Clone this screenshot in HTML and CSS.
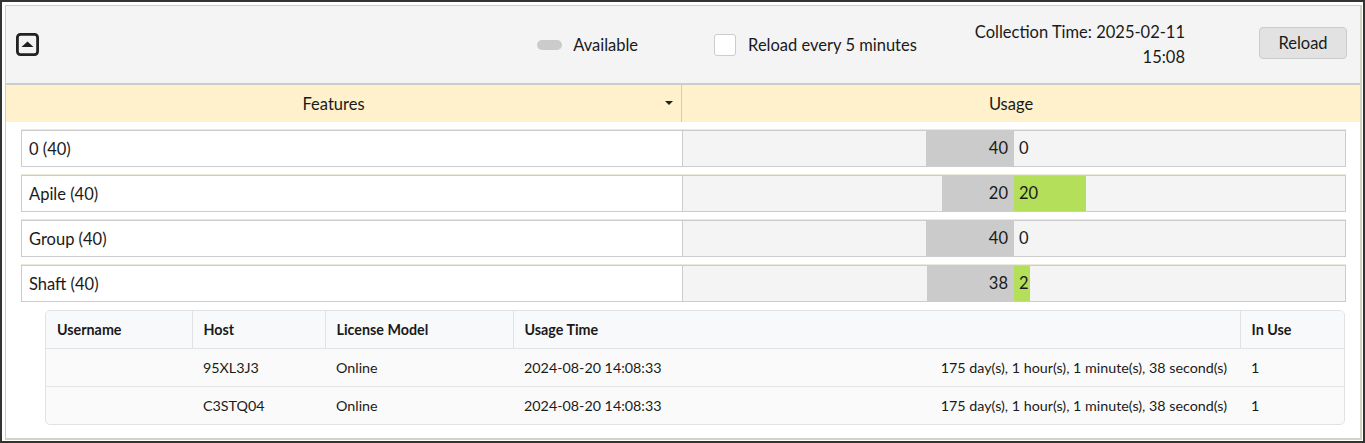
FILE: index.html
```html
<!DOCTYPE html>
<html lang="en">
<head>
  <meta charset="UTF-8" />
  <title>License Usage</title>
  <link rel="stylesheet" href="styles.css">
</head>
<body>
  <div class="frame">
    <div class="panel">

      <div class="toolbar">
        <button class="collapse" title="Collapse">
          <svg width="23" height="23" viewBox="0 0 23 23">
            <rect x="1.4" y="1.4" width="20.2" height="20.2" rx="3" fill="none" stroke="#222" stroke-width="2.8"/>
            <path d="M5.5 14 L11.5 8.5 L17.5 14 Z" fill="#222"/>
          </svg>
        </button>

        <div class="legend"><span class="swatch"></span>Available</div>

        <label class="auto"><span class="box"></span>Reload every 5 minutes</label>

        <div class="stamp">Collection Time: 2025-02-11<br>15:08</div>

        <button class="reload">Reload</button>
      </div>

      <div class="grid-head">
        <div class="col-features">Features <span class="caret"></span></div>
        <div class="col-usage">Usage</div>
      </div>

      <div class="rows">
        <div class="row">
          <div class="name">0 (40)</div>
          <div class="usage">
            <div class="half left"><div class="avail" style="width:88px">40</div></div>
            <div class="half right"><div class="used">0</div></div>
          </div>
        </div>

        <div class="row">
          <div class="name">Apile (40)</div>
          <div class="usage">
            <div class="half left"><div class="avail" style="width:72px">20</div></div>
            <div class="half right"><div class="used on" style="width:72px">20</div></div>
          </div>
        </div>

        <div class="row">
          <div class="name">Group (40)</div>
          <div class="usage">
            <div class="half left"><div class="avail" style="width:88px">40</div></div>
            <div class="half right"><div class="used">0</div></div>
          </div>
        </div>

        <div class="row">
          <div class="name">Shaft (40)</div>
          <div class="usage">
            <div class="half left"><div class="avail" style="width:87px">38</div></div>
            <div class="half right"><div class="used on" style="width:16px">2</div></div>
          </div>
        </div>

        <div class="detail-wrap">
          <table class="detail">
            <thead>
              <tr>
                <th class="c-user">Username</th>
                <th class="c-host">Host</th>
                <th class="c-model">License Model</th>
                <th class="c-time">Usage Time</th>
                <th class="c-use">In Use</th>
              </tr>
            </thead>
            <tbody>
              <tr>
                <td></td>
                <td>95XL3J3</td>
                <td>Online</td>
                <td class="c-time"><span>2024-08-20 14:08:33</span><span>175 day(s), 1 hour(s), 1 minute(s), 38 second(s)</span></td>
                <td>1</td>
              </tr>
              <tr>
                <td></td>
                <td>C3STQ04</td>
                <td>Online</td>
                <td class="c-time"><span>2024-08-20 14:08:33</span><span>175 day(s), 1 hour(s), 1 minute(s), 38 second(s)</span></td>
                <td>1</td>
              </tr>
            </tbody>
          </table>
        </div>
      </div>

    </div>
  </div>
</body>
</html>
```

FILE: styles.css
```css
* { margin: 0; padding: 0; box-sizing: border-box; }

body {
  background: #fff;
  font-family: Lato, "Noto Sans", sans-serif;
  color: #1a1a1a;
  font-size: 16.5px;
}

.frame {
  width: 1365px;
  height: 443px;
  border: 2px solid #333;
  padding: 3px 1px 1px 3px;
}

.panel {
  height: 100%;
  border-top: 1px solid #ccc;
  border-left: 1px solid #ccc;
  border-right: 2px solid #d6d3c4;
  border-bottom: 2px solid #d6d3c4;
}

/* barra superior */
.toolbar {
  height: 79px;
  background: #f4f4f4;
  border-bottom: 2px solid #ccc;
  display: flex;
  align-items: center;
  padding: 0 13px 0 10px;
}

.collapse {
  background: none;
  border: 0;
  width: 23px;
  height: 23px;
  flex: none;
  display: flex;
  cursor: pointer;
}

.collapse svg { display: block; }

.legend {
  margin-left: auto;
  display: flex;
  align-items: center;
  gap: 11px;
}

.swatch {
  width: 25px;
  height: 10px;
  border-radius: 5px;
  background: #cbcbcb;
}

.auto {
  margin-left: 76px;
  display: flex;
  align-items: center;
  gap: 12px;
}

.box {
  width: 22px;
  height: 22px;
  background: #fff;
  border: 1px solid #ccc;
  border-radius: 3px;
}

.stamp {
  margin-left: 58px;
  text-align: right;
  line-height: 25px;
}

.reload {
  margin-left: 74px;
  width: 88px;
  height: 32px;
  margin-top: -4px;
  background: #e2e2e2;
  border: 1px solid #ccc;
  border-radius: 4px;
  font: inherit;
  color: #1a1a1a;
  cursor: pointer;
}

/* cabeçalho da grade */
.grid-head {
  display: flex;
  height: 37px;
  background: #fff1cc;
}

.grid-head > div {
  display: flex;
  align-items: center;
  justify-content: center;
  position: relative;
  padding-right: 20px;
}

.col-features {
  width: 676px;
  border-right: 1px solid #ccc;
}

.col-usage { flex: 1; }

.caret {
  position: absolute;
  right: 8px;
  top: 16px;
  border-left: 4px solid transparent;
  border-right: 4px solid transparent;
  border-top: 4px solid #222;
}

/* linhas */
.rows {
  padding: 8px 14px 0 15px;
  display: flex;
  flex-direction: column;
  gap: 8px;
}

.row {
  display: flex;
  height: 37px;
  box-shadow: 0 -1px 0 #ece9da;
}

.name {
  width: 662px;
  background: #fff;
  border: 1px solid #ccc;
  padding-left: 7px;
  display: flex;
  align-items: center;
}

.usage {
  flex: 1;
  display: flex;
  background: #f4f4f4;
  border: 1px solid #ccc;
  border-left: 0;
}

.half { flex: 1; display: flex; }
.half.left { justify-content: flex-end; }

.avail {
  background: #cbcbcb;
  text-align: right;
  padding-right: 6px;
  line-height: 35px;
}

.used {
  padding-left: 5px;
  line-height: 35px;
  white-space: nowrap;
}

.used.on { background: #b4df5a; }

/* tabela de detalhes */
.detail-wrap {
  margin-left: 24px;
  margin-right: 1px;
  border: 1px solid #e2e2e2;
  border-radius: 5px;
  overflow: hidden;
  background: #fafafa;
}

.detail {
  width: 100%;
  border-collapse: collapse;
  font-size: 14.3px;
}

.detail th {
  text-align: left;
  font-weight: bold;
  background: #f8f9fa;
  height: 37px;
  padding: 0 11px;
  border-left: 1px solid #e2e2e2;
  border-bottom: 1px solid #e2e2e2;
}

.detail th:first-child { border-left: 0; }

.detail td {
  height: 38px;
  padding: 0 11px;
  border-bottom: 1px solid #e6e6e6;
}

.detail tbody tr:last-child td { border-bottom: 0; }

.c-user { width: 146px; }
.c-host { width: 133px; }
.c-model { width: 188px; }
.c-use { width: 104px; }

td.c-time { padding-right: 13px; }
td.c-time span:last-child { float: right; }
```
